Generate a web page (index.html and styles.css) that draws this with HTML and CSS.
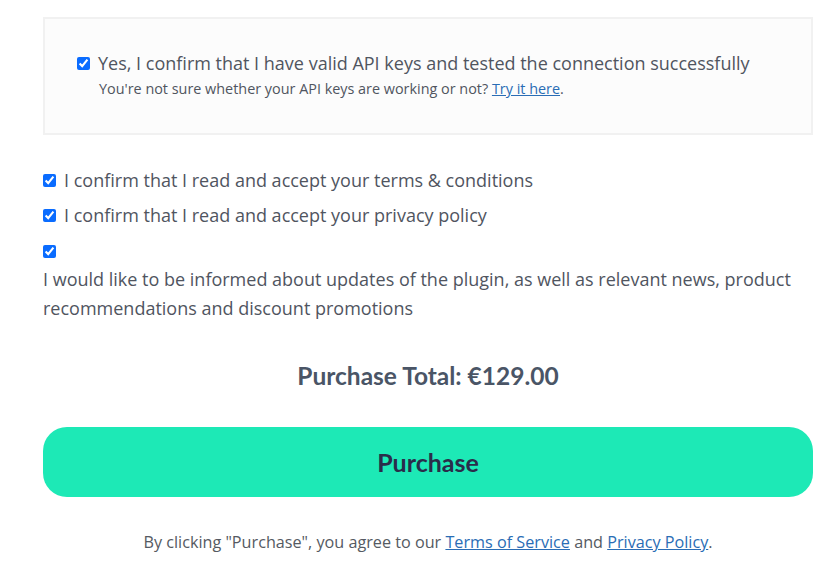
FILE: index.html
```html
<!DOCTYPE html>
<html>
<head>
<meta charset="utf-8">
<link rel="stylesheet" href="styles.css">
</head>
<body>
<div class="page">
  <div class="api-box">
    <label class="check-row big">
      <input type="checkbox" checked>
      <span>Yes, I confirm that I have valid API keys and tested the connection successfully</span>
    </label>
    <p class="hint">You're not sure whether your API keys are working or not? <a href="#">Try it here</a>.</p>
  </div>

  <div class="checks">
    <label class="check-row">
      <input type="checkbox" checked>
      <span>I confirm that I read and accept your terms &amp; conditions</span>
    </label>
    <label class="check-row">
      <input type="checkbox" checked>
      <span>I confirm that I read and accept your privacy policy</span>
    </label>
    <div class="check-block">
      <input type="checkbox" checked>
      <p>I would like to be informed about updates of the plugin, as well as relevant news, product recommendations and discount promotions</p>
    </div>
  </div>

  <h2 class="total">Purchase Total: €129.00</h2>

  <button class="purchase">Purchase</button>

  <p class="legal">By clicking "Purchase", you agree to our <a href="#">Terms of Service</a> and <a href="#">Privacy Policy</a>.</p>
</div>
</body>
</html>
```
FILE: styles.css
```css
html, body {
  margin: 0;
  padding: 0;
  background: #ffffff;
}
body {
  font-family: "Open Sans", "Liberation Sans", sans-serif;
  color: #50555f;
}
.page {
  width: 770px;
  margin-left: 43px;
  padding-top: 17px;
}
.api-box {
  box-sizing: border-box;
  height: 118px;
  background: #fcfcfc;
  border: 2px solid #f1f1f1;
  padding: 31px 0 0 32px;
}
.check-row {
  display: flex;
  align-items: center;
  gap: 8px;
  font-size: 18px;
  line-height: 24px;
}
.check-row input {
  margin: 0;
  width: 13px;
  height: 13px;
  accent-color: #0a6cff;
}
.check-row.big {
  line-height: 26px;
}
.hint {
  margin: 3px 0 0 22px;
  font-size: 14.4px;
  line-height: 20px;
}
a {
  color: #2a6db5;
}
.checks {
  margin-top: 33px;
  display: flex;
  flex-direction: column;
  gap: 11px;
}
.check-block {
  margin-top: 7px;
}
.check-block input {
  margin: 0;
  width: 13px;
  height: 13px;
  accent-color: #0a6cff;
  display: block;
}
.check-block p {
  margin: 7px 0 0 0;
  font-size: 18px;
  line-height: 29px;
}
.total {
  margin: 38px 0 0 0;
  text-align: center;
  font-family: "Lato", "Liberation Sans", sans-serif;
  font-weight: 700;
  font-size: 24.5px;
  line-height: 30px;
  color: #4a5566;
}
.purchase {
  display: block;
  width: 770px;
  height: 70px;
  margin-top: 36px;
  border: none;
  border-radius: 24px;
  background: #1de9b6;
  font-family: "Lato", "Liberation Sans", sans-serif;
  font-weight: 700;
  font-size: 25px;
  color: #2a2d4a;
}
.legal {
  margin: 33px 0 0 0;
  text-align: center;
  font-size: 16.2px;
  line-height: 24px;
  color: #555a62;
}
```
